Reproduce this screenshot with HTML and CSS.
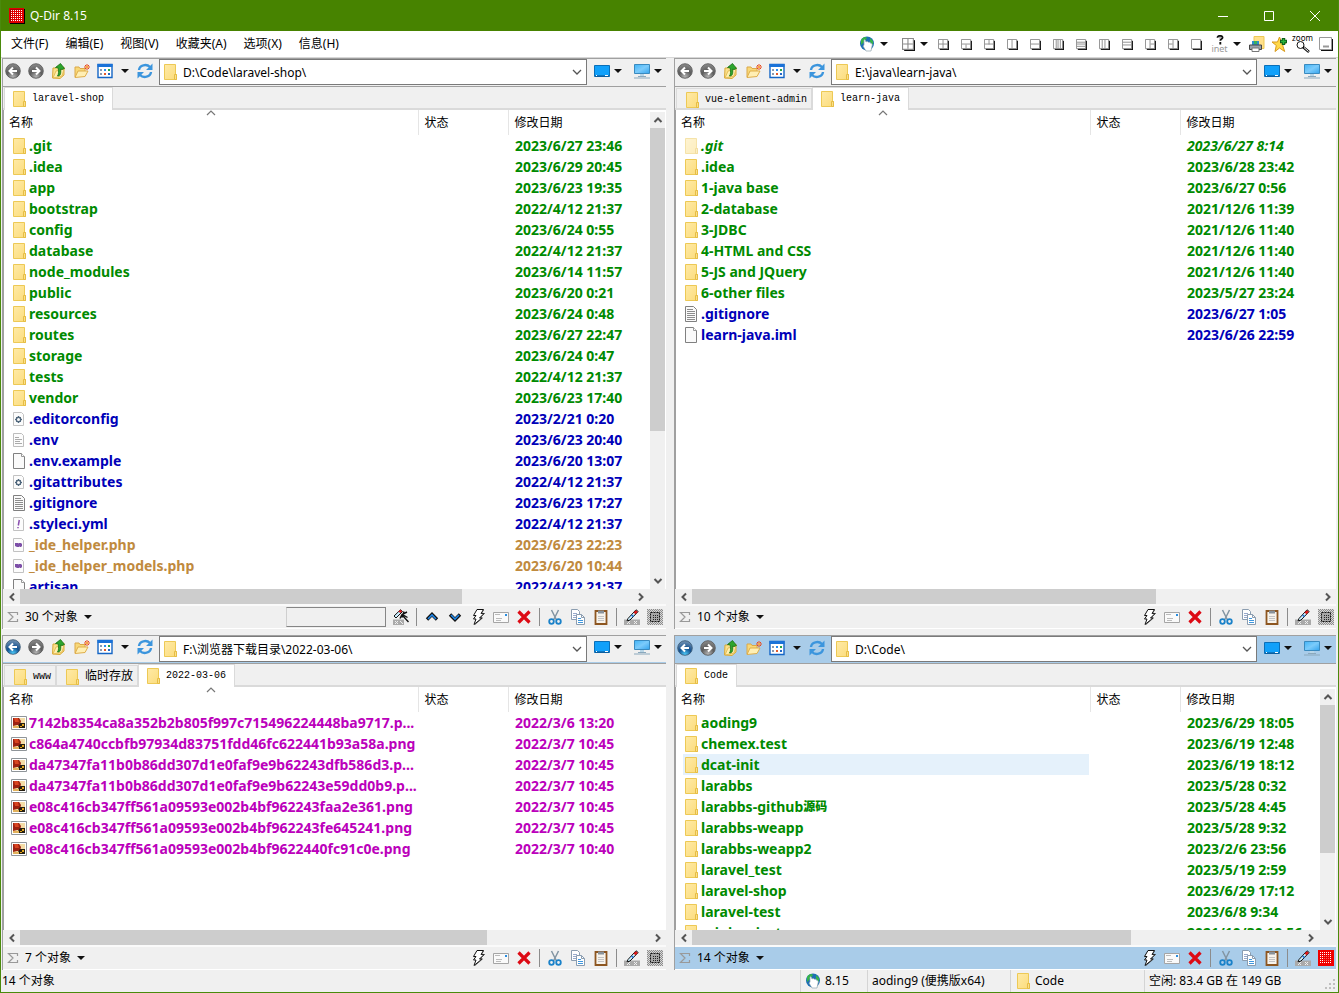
FILE: index.html
```html
<!DOCTYPE html>
<html lang="zh-CN">
<head>
<meta charset="utf-8">
<title>Q-Dir 8.15</title>
<link rel="stylesheet" href="styles.css">
</head>
<body>
<svg class="defs" aria-hidden="true">
  <defs>
    <linearGradient id="gFolder" x1="0" y1="0" x2="1" y2="1"><stop offset="0" stop-color="#ffeaa6"/><stop offset="1" stop-color="#fbdc7c"/></linearGradient>
    <radialGradient id="gGray" cx=".5" cy=".9" r=".9"><stop offset="0" stop-color="#b5b5b5"/><stop offset=".5" stop-color="#5c5c5c"/><stop offset="1" stop-color="#8d8d8d"/></radialGradient>
    <radialGradient id="gBlue" cx=".5" cy=".95" r=".9"><stop offset="0" stop-color="#4fd0ff"/><stop offset=".5" stop-color="#12508f"/><stop offset="1" stop-color="#6f8fb0"/></radialGradient>
    <linearGradient id="gScreen" x1="0" y1="0" x2="1" y2="1"><stop offset="0" stop-color="#41b4f7"/><stop offset=".5" stop-color="#7ccbfb"/><stop offset="1" stop-color="#33a4ee"/></linearGradient>
    <pattern id="pDots" width="2" height="2" patternUnits="userSpaceOnUse"><path d="M0 0h1v1H0z" fill="#fff"/></pattern>
    <pattern id="pGray" width="2" height="2" patternUnits="userSpaceOnUse"><path d="M0 0h2v2H0z" fill="#d8d8d8"/><path d="M0 0h1v1H0zM1 1h1v1H1z" fill="#8c8c8c"/></pattern>
    <pattern id="pDark" width="2" height="2" patternUnits="userSpaceOnUse"><path d="M0 0h1v1H0z" fill="#222"/></pattern>
  </defs>
  <symbol id="folder" viewBox="0 0 16 16"><path d="M2.500 .5h11v10h1v5h-12z" fill="url(#gFolder)" stroke="#edc955"/><path d="M12.500 15v-4.500h2v5h-2z" fill="#fbe08a" stroke="#e6bd45"/></symbol>
  <symbol id="back" viewBox="0 0 16 16"><circle cx="8" cy="8" r="7.300" fill="url(#gGray)" stroke="#555" stroke-width=".8"/><path d="M12 8H5M8 4.500 4.500 8 8 11.500" fill="none" stroke="#fff" stroke-width="2"/></symbol>
  <symbol id="backblue" viewBox="0 0 16 16"><circle cx="8" cy="8" r="7.300" fill="url(#gBlue)" stroke="#34536f" stroke-width=".8"/><path d="M12 8H5M8 4.500 4.500 8 8 11.500" fill="none" stroke="#fff" stroke-width="2"/></symbol>
  <symbol id="fwd" viewBox="0 0 16 16"><circle cx="8" cy="8" r="7.300" fill="url(#gGray)" stroke="#555" stroke-width=".8"/><path d="M4 8h7M8 4.500 11.500 8 8 11.500" fill="none" stroke="#fff" stroke-width="2"/></symbol>
  <symbol id="up" viewBox="0 0 16 16"><path d="M1.500 15 2 5h3l1-1.500h3l1 1.500 3-1v8L9 15.500z" fill="#fbe08a" stroke="#d9a93a"/><path d="M2 15 5 8l8-2-2 7z" fill="#fff0b0" stroke="#dfb54a" stroke-width=".8"/><path d="M6.500 13c3 0 3.500-2 3.200-7L11 6.500 13.500 5.500 9.500.5 4.500 4.500l2.700.5c.3 3 .8 6-.7 8z" fill="#2da52d" stroke="#146e14" stroke-width=".8"/></symbol>
  <symbol id="newf" viewBox="0 0 16 16"><path d="M1 14V4h4l1 1.500h5V8" fill="#f8d878" stroke="#dba848"/><path d="M1 14.500 4 8h10l-3 5.500z" fill="#ffefb4" stroke="#dfae4a"/><path d="M13 1v6M10 4h6M11 2l4 4m0-4-4 4" stroke="#e8491c"/><circle cx="13" cy="4" r="1" fill="#ffc64a"/></symbol>
  <symbol id="views" viewBox="0 0 16 16"><path d="M1 1.500h14v13H1z" fill="#fff" stroke="#1465c5" stroke-width="1.400"/><path d="M.5 1h15v3H.5z" fill="#1a72d8"/><path d="M3 6h2v2H3zM3 10h2v2H3z" fill="#8a9ab0"/><path d="M7 6h2v2H7z" fill="#2a8cf0"/><path d="M11 6h2v2h-2z" fill="#27a548"/><path d="M7 10h2v2H7z" fill="#e35a2c"/><path d="M11 10h2v2h-2z" fill="#2167c8"/></symbol>
  <symbol id="refresh" viewBox="0 0 16 16"><path d="M2 7c.5-5 7.500-6.500 11-3M14 9c-.5 5-7.500 6.500-11 3" fill="none" stroke="#3c95dd" stroke-width="2.400"/><path d="M15.500.5v6.500H9zM.5 15.500V9H7z" fill="#3c95dd"/></symbol>
  <symbol id="desk" viewBox="0 0 16 16"><path d="M.5 2.500h15v11H.5z" fill="#10a0fa" stroke="#0a6fb8"/><path d="M1 13h14" stroke="#0a4f88"/><path d="M2 12.500h1M11 12.500h3" stroke="#fff"/></symbol>
  <symbol id="pc" viewBox="0 0 16 16"><path d="M.5 1.500h15v9H.5z" fill="url(#gScreen)" stroke="#3a8abf"/><path d="M6 11h4v2H6z" fill="#b9d5e6"/><path d="M4 13.500h8M0 15h16" stroke="#8aa8bc"/></symbol>
  <symbol id="caret" viewBox="0 0 8 8"><path d="M0 2h8L4 6z" fill="#111"/></symbol>
  <symbol id="cdown" viewBox="0 0 10 10"><path d="M1 3l4 4 4-4" fill="none" stroke="#555" stroke-width="1.300"/></symbol>
  <symbol id="sorted" viewBox="0 0 10 10"><path d="M1 7l4-4 4 4" fill="none" stroke="#777" stroke-width="1.200"/></symbol>
  <symbol id="sup" viewBox="0 0 10 10"><path d="M1.500 7 5 3.500 8.500 7" fill="none" stroke="#555" stroke-width="2"/></symbol>
  <symbol id="sdn" viewBox="0 0 10 10"><path d="M1.500 3 5 6.500 8.500 3" fill="none" stroke="#555" stroke-width="2"/></symbol>
  <symbol id="slf" viewBox="0 0 10 10"><path d="M7 1.500 3.500 5 7 8.500" fill="none" stroke="#555" stroke-width="2"/></symbol>
  <symbol id="srt" viewBox="0 0 10 10"><path d="M3 1.500 6.500 5 3 8.500" fill="none" stroke="#555" stroke-width="2"/></symbol>
  <symbol id="page" viewBox="0 0 16 16"><path d="M2.500.5h8l3 3v12h-11z" fill="#fafafa" stroke="#808080"/><path d="M10.500.5v3h3" fill="#fff" stroke="#999"/></symbol>
  <symbol id="lines" viewBox="0 0 16 16"><path d="M2.500.5h8l3 3v12h-11z" fill="#fafafa" stroke="#808080"/><path d="M4 3.500h6M4 5.500h8M4 7.500h8M4 9.500h8M4 11.500h8M4 13.500h8" stroke="#8c8c8c"/></symbol>
  <symbol id="env" viewBox="0 0 16 16"><path d="M2.500 1.500h8l2 2v11h-10z" fill="#fcfcfc" stroke="#bdbdbd"/><path d="M4 5.500h4M4 7.500h7M4 9.500h5M4 11.500h7" stroke="#aaa"/></symbol>
  <symbol id="gear" viewBox="0 0 16 16"><path d="M2.500 1.500h8l2 2v11h-10z" fill="#fcfcfc" stroke="#c2c2c2"/><circle cx="7.500" cy="8.500" r="2.200" fill="none" stroke="#50677c" stroke-width="1.400"/><path d="M7.500 5v1M7.500 11v1M4 8.500h1M10 8.500h1M5 6l.8.800M10 6l-.8.800M5 11l.8-.8M10 11l-.8-.8" stroke="#50677c"/></symbol>
  <symbol id="yml" viewBox="0 0 16 16"><path d="M2.500 1.500h8l2 2v11h-10z" fill="#fcfcfc" stroke="#c2c2c2"/><path d="M8.300 4 7.300 9.500M7 11v1.300" stroke="#8a4fb0" stroke-width="1.500"/></symbol>
  <symbol id="php" viewBox="0 0 16 16"><path d="M2.500 1.500h8l2 2v11h-10z" fill="#fcfcfc" stroke="#c2c2c2"/><path d="M4 6h3l.5.5.5-.5h2l1 1v2l-1 1H9l-.5-.8-.5.800H6L4 9z" fill="#7d4fa8"/></symbol>
  <symbol id="img" viewBox="0 0 16 16"><path d="M.5 1.500h15v13H.5z" fill="#fff" stroke="#8f9599"/><path d="M2 3h12v10H2z" fill="#f3dca6"/><path d="M2 3h6l2 3-1 4H6l-4 1z" fill="#9c2112"/><path d="M3 3h4l1 4H4z" fill="#d84421"/><path d="M9 8h5v5H8l-1-2z" fill="#241d10"/><path d="M2 11h6v2H2z" fill="#e2b25c"/><path d="M11 9h2v2h-2zM9 11h2v1H9z" fill="#e2a51c"/></symbol>
  <symbol id="sigma" viewBox="0 0 16 16"><path d="M12.500 6V3.500h-9L8 8l-4.500 4.500h9V10" fill="none" stroke="#999" stroke-width="1.200"/></symbol>
  <symbol id="bolt" viewBox="0 0 16 16"><path d="M7 .5h6.500L11 4.500h3L9.500 9H12l-8 6.500L6 10H3.500L6 6.500H3.500z" fill="#fff" stroke="#111"/><path d="M13.500 1 11.500 4.500h3L10 9h2.500L5 15.500" fill="none" stroke="#333" stroke-width=".7"/></symbol>
  <symbol id="mail" viewBox="0 0 16 16"><path d="M.5 3.500h15v10H.5z" fill="#fafafa" stroke="#a5a5a5"/><path d="M3 9.500h6M3 11.500h5M2 5.500h5" stroke="#bbb"/><path d="M12 5h2v2h-2z" fill="#2b8ee0"/></symbol>
  <symbol id="del" viewBox="0 0 16 16"><path d="m2.500 2.500 11 11M13.500 2.500l-11 11" stroke="#dd0a14" stroke-width="3.200"/></symbol>
  <symbol id="cut" viewBox="0 0 16 16"><path d="m4.500 1 5 10M11.500 1l-5 10" stroke="#8395a3" stroke-width="1.500"/><circle cx="4.500" cy="12.500" r="2.300" fill="none" stroke="#1b82c9" stroke-width="1.800"/><circle cx="11.500" cy="12.500" r="2.300" fill="none" stroke="#1b82c9" stroke-width="1.800"/></symbol>
  <symbol id="copy" viewBox="0 0 16 16"><path d="M1.500.5h6l2 2v8h-8z" fill="#fff" stroke="#8b9db0"/><path d="M3 4.500h4M3 6.500h3M3 8.500h3" stroke="#9ac"/><path d="M6.500 5.500h5l3 3v7h-8z" fill="#fff" stroke="#8b9db0"/><path d="M11.500 5.500v3h3" fill="none" stroke="#8b9db0"/><path d="M8 9.500h3M8 11.500h5M8 13.500h5" stroke="#3e96dd"/></symbol>
  <symbol id="paste" viewBox="0 0 16 16"><path d="M2.500 2h11v13h-11z" fill="#f7f3ec" stroke="#8d5620" stroke-width="1.800"/><path d="M5 1.500h6v3H5z" fill="#889199"/><path d="M5 7.500h6M5 9.500h6M5 11.500h6" stroke="#c3c3c3"/></symbol>
  <symbol id="pen" viewBox="0 0 16 16"><path d="M0 10.500h16V16H0z" fill="#aaa"/><path d="M3 12l3 3m0-3-3 3M10 12l3 3m0-3-3 3" stroke="#eee"/><path d="M4 9.500 12 .8l2.200 1.700L6 11l-3 1z" fill="#cdefff" stroke="#111"/><path d="m9.500 3.600 2.400-2.400 2 1.600-2.400 2.400z" fill="#e01818"/><path d="m7.500 6 2 1.600" stroke="#1670d8" stroke-width="1.500"/></symbol>
  <symbol id="wand" viewBox="0 0 16 16"><path d="M0 10.500h11V16H0z" fill="#aaa"/><path d="M2 12l3 3m0-3-3 3M7 12l3 3" stroke="#eee"/><path d="M1 7 7.500.8l2 1.700L3 9z" fill="#cdefff" stroke="#111"/><path d="m5.500 2.600 2-1.800 1.700 1.600-2 1.700z" fill="#e01818"/><path d="m15.500 13-5.500-6M7 9.500l2-4 5-2.500M9.500 5.500l5 3M11 2.500l-2 6" fill="none" stroke="#111" stroke-width="1.400"/></symbol>
  <symbol id="dots" viewBox="0 0 16 16"><path d="M0 0h16v16H0z" fill="url(#pGray)"/><path d="M3.500 3.500h9v9h-9z" fill="#a6a6a6" stroke="#111" stroke-dasharray="2 1"/><path d="M5 5h7v7H5z" fill="url(#pDark)"/></symbol>
  <symbol id="dotsred" viewBox="0 0 16 16"><path d="M0 0h16v16H0z" fill="#f00000"/><path d="M2 2h12v12H2z" fill="url(#pDots)"/><path d="M5 5h6v6H5z" fill="#f00000" fill-opacity=".6"/></symbol>
  <symbol id="applogo" viewBox="0 0 16 16"><path d="M1 1h15v15H1z" fill="#000"/><path d="M0 0h15v15H0z" fill="#e00000"/><path d="M1 1h13v13H1z" fill="#a00"/><path d="M2 2h12v12H2z" fill="#e00000"/><path d="M2 2h12v12H2z" fill="url(#pDots)"/></symbol>
  <symbol id="nup" viewBox="0 0 16 16"><path d="M3 10.500 8 5.500l5 5" fill="none" stroke="#111" stroke-width="3.400"/><path d="M4 10 8 6l4 4" fill="none" stroke="#1f86e8" stroke-width="1.600"/></symbol>
  <symbol id="ndn" viewBox="0 0 16 16"><path d="m3 5.500 5 5 5-5" fill="none" stroke="#111" stroke-width="3.400"/><path d="m4 6 4 4 4-4" fill="none" stroke="#1f86e8" stroke-width="1.600"/></symbol>
  <symbol id="globe" viewBox="0 0 16 16"><circle cx="8" cy="7.500" r="7" fill="#1d6fb4"/><path d="M2 4c3-4 5-3 6-2L5 6 2 9zM11 2l3 3v4l-3-3z" fill="#35b44a"/><path d="M5 4c1-.8 1.500 0 2 2 1-.7 2-.5 2.500.3 1-.4 2 0 2.200 1 1 0 1.600.6 1.500 2L12 15H7L4 10l1-.8z" fill="#fff" stroke="#8fa3b0" stroke-width=".7"/></symbol>
  <symbol id="frame" viewBox="0 0 12 12"><path d="M2 2h10v10H2z" fill="#111"/><path d="M.5.500h10v10H.5z" fill="#fff" stroke="#8a8a8a"/></symbol>
  <symbol id="help" viewBox="0 0 16 16"><path d="M4 4.500C4 0 12.500.5 12 4.500c0 2-3.500 2-3.500 4.500M8.500 11v4" fill="none" stroke="#111" stroke-width="3"/><circle cx="8" cy="4.500" r="1.500" fill="#999"/></symbol>
  <symbol id="printer" viewBox="0 0 16 16"><path d="M5 .5h10v12H5z" fill="#ffe08a" stroke="#edc955"/><path d="M3 5h7v4H3z" fill="#2a8fce"/><path d="M5 5h3v3H5z" fill="#37b25c"/><path d="M.5 9h12v4.500H.5z" fill="#9aa2aa" stroke="#444"/><path d="M3 12h7v3.500H3z" fill="#fff" stroke="#777"/></symbol>
  <symbol id="star" viewBox="0 0 16 16"><path d="m7.500 1 2 5h5.500l-4.300 3.500 2 6L7.500 12 3 15.500 4.300 9.500 0 6h5.500z" fill="#ffd94a" stroke="#d99a1c"/><path d="M8 5.500h7M11.500 2v7" stroke="#0d5f1a" stroke-width="3.400"/><path d="M9 5.500h5M11.500 3v5" stroke="#29b33c" stroke-width="1.400"/></symbol>
  <symbol id="lens" viewBox="0 0 16 12"><circle cx="5.500" cy="4" r="3.500" fill="#fff" stroke="#111"/><path d="m8 6 6 5" stroke="#111" stroke-width="2.600"/><path d="m9 6.500 4.500 4" stroke="#fff" stroke-width="1"/></symbol>
  <symbol id="minbox" viewBox="0 0 14 14"><path d="M2 2h12v12H2z" fill="#111"/><path d="M.5.500h12v12H.5z" fill="#fff" stroke="#999"/><path d="M4 9.500h6" stroke="#999" stroke-width="2"/></symbol>
</svg>

<div class="window">
  <header class="title">
    <svg class="i16"><use href="#applogo"/></svg>
    <h1>Q-Dir 8.15</h1>
    <button class="wbtn" aria-label="最小化"><svg viewBox="0 0 10 10"><path d="M0 5.500h10"/></svg></button>
    <button class="wbtn" aria-label="最大化"><svg viewBox="0 0 10 10"><path d="M.5.500h9v9h-9z"/></svg></button>
    <button class="wbtn" aria-label="关闭"><svg viewBox="0 0 10 10"><path d="m0 0 10 10M10 0 0 10"/></svg></button>
  </header>

  <nav class="menu">
    <button>文件(F)</button><button>编辑(E)</button><button>视图(V)</button><button>收藏夹(A)</button><button>选项(X)</button><button>信息(H)</button>
    <div class="quick">
      <button aria-label="网络"><svg class="i16"><use href="#globe"/></svg></button>
      <button class="c c1" aria-label="网络菜单"><svg class="i8"><use href="#caret"/></svg></button>
      <button aria-label="布局"><svg class="i12" viewBox="0 0 12 12"><use href="#frame"/><path class="g" d="M5.500 1v9M1 5.500h9"/></svg></button>
      <button class="c c2" aria-label="布局菜单"><svg class="i8"><use href="#caret"/></svg></button>
      <button aria-label="布局 1"><svg class="i10" viewBox="0 0 12 12"><use href="#frame"/><path class="g" d="M5.500 1v9M1 5.500h9"/></svg></button>
      <button aria-label="布局 2"><svg class="i10" viewBox="0 0 12 12"><use href="#frame"/><path class="g" d="M5.500 6v4M1 5.500h9"/></svg></button>
      <button aria-label="布局 3"><svg class="i10" viewBox="0 0 12 12"><use href="#frame"/><path class="g" d="M5.500 1v5M1 5.500h9"/></svg></button>
      <button aria-label="布局 4"><svg class="i10" viewBox="0 0 12 12"><use href="#frame"/><path class="g" d="M5.500 1v9"/></svg></button>
      <button aria-label="布局 5"><svg class="i10" viewBox="0 0 12 12"><use href="#frame"/><path class="g" d="M1 5.500h9"/></svg></button>
      <button aria-label="布局 6"><svg class="i10" viewBox="0 0 12 12"><use href="#frame"/><path class="g" d="M3.500 1v9M5.500 1v9M8 1v9"/></svg></button>
      <button aria-label="布局 7"><svg class="i10" viewBox="0 0 12 12"><use href="#frame"/><path class="g" d="M1 3.500h9M1 5.500h9M1 8h9"/></svg></button>
      <button aria-label="布局 8"><svg class="i10" viewBox="0 0 12 12"><use href="#frame"/><path class="g" d="M3.500 1v9M6.500 1v9"/></svg></button>
      <button aria-label="布局 9"><svg class="i10" viewBox="0 0 12 12"><use href="#frame"/><path class="g" d="M1 3.500h9M1 6.500h9"/></svg></button>
      <button aria-label="布局 10"><svg class="i10" viewBox="0 0 12 12"><use href="#frame"/><path class="g" d="M5.500 1v9M6 5.500h4"/></svg></button>
      <button aria-label="布局 11"><svg class="i10" viewBox="0 0 12 12"><use href="#frame"/><path class="g" d="M5.500 1v9M1 5.500h4"/></svg></button>
      <button aria-label="布局 12"><svg class="i10" viewBox="0 0 12 12"><use href="#frame"/></svg></button>
      <button class="stack"><svg class="helpi"><use href="#help"/></svg><span class="inet">inet</span></button>
      <button class="c c3" aria-label="帮助菜单"><svg class="i8"><use href="#caret"/></svg></button>
      <button aria-label="打印"><svg class="i16"><use href="#printer"/></svg></button>
      <button aria-label="收藏"><svg class="i16"><use href="#star"/></svg></button>
      <button class="stack"><span class="zoomt">zoom</span><svg class="lensi"><use href="#lens"/></svg></button>
      <button aria-label="托盘"><svg class="i14"><use href="#minbox"/></svg></button>
    </div>
  </nav>

  <main class="panes">
    <section class="pane" aria-label="窗格 1">
      <div class="tools">
        <button aria-label="后退"><svg class="i16"><use href="#back"/></svg></button>
        <button aria-label="前进"><svg class="i16"><use href="#fwd"/></svg></button>
        <button aria-label="向上"><svg class="i16"><use href="#up"/></svg></button>
        <button aria-label="新建"><svg class="i16"><use href="#newf"/></svg></button>
        <button aria-label="查看"><svg class="i16"><use href="#views"/></svg></button>
        <button class="c" aria-label="查看菜单"><svg class="i8"><use href="#caret"/></svg></button>
        <button aria-label="刷新"><svg class="i16"><use href="#refresh"/></svg></button>
        <div class="addr"><svg class="i16"><use href="#folder"/></svg><input type="text" aria-label="地址" value="D:\Code\laravel-shop\"><button aria-label="展开"><svg class="i10"><use href="#cdown"/></svg></button></div>
        <div class="disks"><button aria-label="桌面"><svg class="i16"><use href="#desk"/></svg></button><button aria-label="桌面菜单"><svg class="i8"><use href="#caret"/></svg></button><button class="pc" aria-label="电脑"><svg class="i16"><use href="#pc"/></svg></button><button aria-label="电脑菜单"><svg class="i8"><use href="#caret"/></svg></button></div>
      </div>
      <div class="tabs"><button class="tab on"><svg class="i16"><use href="#folder"/></svg>laravel-shop</button></div>
      <div class="body">
        <div class="list">
          <table>
            <colgroup><col class="cn"><col class="cs"><col></colgroup>
            <thead><tr><th>名称<svg class="sort"><use href="#sorted"/></svg></th><th>状态</th><th>修改日期</th></tr></thead>
            <tbody>
              <tr class="dir"><td><span><svg class="i16"><use href="#folder"/></svg>.git</span></td><td></td><td>2023/6/27 23:46</td></tr>
              <tr class="dir"><td><span><svg class="i16"><use href="#folder"/></svg>.idea</span></td><td></td><td>2023/6/29 20:45</td></tr>
              <tr class="dir"><td><span><svg class="i16"><use href="#folder"/></svg>app</span></td><td></td><td>2023/6/23 19:35</td></tr>
              <tr class="dir"><td><span><svg class="i16"><use href="#folder"/></svg>bootstrap</span></td><td></td><td>2022/4/12 21:37</td></tr>
              <tr class="dir"><td><span><svg class="i16"><use href="#folder"/></svg>config</span></td><td></td><td>2023/6/24 0:55</td></tr>
              <tr class="dir"><td><span><svg class="i16"><use href="#folder"/></svg>database</span></td><td></td><td>2022/4/12 21:37</td></tr>
              <tr class="dir"><td><span><svg class="i16"><use href="#folder"/></svg>node_modules</span></td><td></td><td>2023/6/14 11:57</td></tr>
              <tr class="dir"><td><span><svg class="i16"><use href="#folder"/></svg>public</span></td><td></td><td>2023/6/20 0:21</td></tr>
              <tr class="dir"><td><span><svg class="i16"><use href="#folder"/></svg>resources</span></td><td></td><td>2023/6/24 0:48</td></tr>
              <tr class="dir"><td><span><svg class="i16"><use href="#folder"/></svg>routes</span></td><td></td><td>2023/6/27 22:47</td></tr>
              <tr class="dir"><td><span><svg class="i16"><use href="#folder"/></svg>storage</span></td><td></td><td>2023/6/24 0:47</td></tr>
              <tr class="dir"><td><span><svg class="i16"><use href="#folder"/></svg>tests</span></td><td></td><td>2022/4/12 21:37</td></tr>
              <tr class="dir"><td><span><svg class="i16"><use href="#folder"/></svg>vendor</span></td><td></td><td>2023/6/23 17:40</td></tr>
              <tr class="file"><td><span><svg class="i16"><use href="#gear"/></svg>.editorconfig</span></td><td></td><td>2023/2/21 0:20</td></tr>
              <tr class="file"><td><span><svg class="i16"><use href="#env"/></svg>.env</span></td><td></td><td>2023/6/23 20:40</td></tr>
              <tr class="file"><td><span><svg class="i16"><use href="#page"/></svg>.env.example</span></td><td></td><td>2023/6/20 13:07</td></tr>
              <tr class="file"><td><span><svg class="i16"><use href="#gear"/></svg>.gitattributes</span></td><td></td><td>2022/4/12 21:37</td></tr>
              <tr class="file"><td><span><svg class="i16"><use href="#lines"/></svg>.gitignore</span></td><td></td><td>2023/6/23 17:27</td></tr>
              <tr class="file"><td><span><svg class="i16"><use href="#yml"/></svg>.styleci.yml</span></td><td></td><td>2022/4/12 21:37</td></tr>
              <tr class="php"><td><span><svg class="i16"><use href="#php"/></svg>_ide_helper.php</span></td><td></td><td>2023/6/23 22:23</td></tr>
              <tr class="php"><td><span><svg class="i16"><use href="#php"/></svg>_ide_helper_models.php</span></td><td></td><td>2023/6/20 10:44</td></tr>
              <tr class="file"><td><span><svg class="i16"><use href="#page"/></svg>artisan</span></td><td></td><td>2022/4/12 21:37</td></tr>
            </tbody>
          </table>
        </div>
        <div class="vbar"><button aria-label="上"><svg class="i10"><use href="#sup"/></svg></button><div class="track"><div class="thumb" style="height:68%"></div></div><button aria-label="下"><svg class="i10"><use href="#sdn"/></svg></button></div>
      </div>
      <div class="hbar corner"><button aria-label="左"><svg class="i10"><use href="#slf"/></svg></button><div class="track"><div class="thumb" style="width:72.300%"></div></div><button aria-label="右"><svg class="i10"><use href="#srt"/></svg></button></div>
      <div class="stat">
        <svg class="i16"><use href="#sigma"/></svg><button class="count">30 个对象<svg class="i8"><use href="#caret"/></svg></button>
        <div class="acts">
          <input type="text" class="filter" aria-label="过滤">
          <button aria-label="过滤选项"><svg class="i16"><use href="#wand"/></svg></button><i class="sep"></i>
          <button aria-label="上一个"><svg class="i16"><use href="#nup"/></svg></button>
          <button aria-label="下一个"><svg class="i16"><use href="#ndn"/></svg></button>
          <button aria-label="快速"><svg class="i16"><use href="#bolt"/></svg></button>
          <button aria-label="邮件"><svg class="i16"><use href="#mail"/></svg></button>
          <button aria-label="删除"><svg class="i16"><use href="#del"/></svg></button><i class="sep"></i>
          <button aria-label="剪切"><svg class="i16"><use href="#cut"/></svg></button>
          <button aria-label="复制"><svg class="i16"><use href="#copy"/></svg></button>
          <button aria-label="粘贴"><svg class="i16"><use href="#paste"/></svg></button><i class="sep"></i>
          <button aria-label="重命名"><svg class="i16"><use href="#pen"/></svg></button>
          <button aria-label="选择"><svg class="i16"><use href="#dots"/></svg></button>
        </div>
      </div>
    </section>

    <section class="pane right" aria-label="窗格 2">
      <div class="tools">
        <button aria-label="后退"><svg class="i16"><use href="#back"/></svg></button>
        <button aria-label="前进"><svg class="i16"><use href="#fwd"/></svg></button>
        <button aria-label="向上"><svg class="i16"><use href="#up"/></svg></button>
        <button aria-label="新建"><svg class="i16"><use href="#newf"/></svg></button>
        <button aria-label="查看"><svg class="i16"><use href="#views"/></svg></button>
        <button class="c" aria-label="查看菜单"><svg class="i8"><use href="#caret"/></svg></button>
        <button aria-label="刷新"><svg class="i16"><use href="#refresh"/></svg></button>
        <div class="addr"><svg class="i16"><use href="#folder"/></svg><input type="text" aria-label="地址" value="E:\java\learn-java\"><button aria-label="展开"><svg class="i10"><use href="#cdown"/></svg></button></div>
        <div class="disks"><button aria-label="桌面"><svg class="i16"><use href="#desk"/></svg></button><button aria-label="桌面菜单"><svg class="i8"><use href="#caret"/></svg></button><button class="pc" aria-label="电脑"><svg class="i16"><use href="#pc"/></svg></button><button aria-label="电脑菜单"><svg class="i8"><use href="#caret"/></svg></button></div>
      </div>
      <div class="tabs"><button class="tab"><svg class="i16"><use href="#folder"/></svg>vue-element-admin</button><button class="tab on"><svg class="i16"><use href="#folder"/></svg>learn-java</button></div>
      <div class="body">
        <div class="list">
          <table>
            <colgroup><col class="cn"><col class="cs"><col></colgroup>
            <thead><tr><th>名称<svg class="sort"><use href="#sorted"/></svg></th><th>状态</th><th>修改日期</th></tr></thead>
            <tbody>
              <tr class="dir hid"><td><span><svg class="i16"><use href="#folder"/></svg>.git</span></td><td></td><td>2023/6/27 8:14</td></tr>
              <tr class="dir"><td><span><svg class="i16"><use href="#folder"/></svg>.idea</span></td><td></td><td>2023/6/28 23:42</td></tr>
              <tr class="dir"><td><span><svg class="i16"><use href="#folder"/></svg>1-java base</span></td><td></td><td>2023/6/27 0:56</td></tr>
              <tr class="dir"><td><span><svg class="i16"><use href="#folder"/></svg>2-database</span></td><td></td><td>2021/12/6 11:39</td></tr>
              <tr class="dir"><td><span><svg class="i16"><use href="#folder"/></svg>3-JDBC</span></td><td></td><td>2021/12/6 11:40</td></tr>
              <tr class="dir"><td><span><svg class="i16"><use href="#folder"/></svg>4-HTML and CSS</span></td><td></td><td>2021/12/6 11:40</td></tr>
              <tr class="dir"><td><span><svg class="i16"><use href="#folder"/></svg>5-JS and JQuery</span></td><td></td><td>2021/12/6 11:40</td></tr>
              <tr class="dir"><td><span><svg class="i16"><use href="#folder"/></svg>6-other files</span></td><td></td><td>2023/5/27 23:24</td></tr>
              <tr class="file"><td><span><svg class="i16"><use href="#lines"/></svg>.gitignore</span></td><td></td><td>2023/6/27 1:05</td></tr>
              <tr class="file"><td><span><svg class="i16"><use href="#page"/></svg>learn-java.iml</span></td><td></td><td>2023/6/26 22:59</td></tr>
            </tbody>
          </table>
        </div>
      </div>
      <div class="hbar"><button aria-label="左"><svg class="i10"><use href="#slf"/></svg></button><div class="track"><div class="thumb" style="width:74%"></div></div><button aria-label="右"><svg class="i10"><use href="#srt"/></svg></button></div>
      <div class="stat">
        <svg class="i16"><use href="#sigma"/></svg><button class="count">10 个对象<svg class="i8"><use href="#caret"/></svg></button>
        <div class="acts">
          <button aria-label="快速"><svg class="i16"><use href="#bolt"/></svg></button>
          <button aria-label="邮件"><svg class="i16"><use href="#mail"/></svg></button>
          <button aria-label="删除"><svg class="i16"><use href="#del"/></svg></button><i class="sep"></i>
          <button aria-label="剪切"><svg class="i16"><use href="#cut"/></svg></button>
          <button aria-label="复制"><svg class="i16"><use href="#copy"/></svg></button>
          <button aria-label="粘贴"><svg class="i16"><use href="#paste"/></svg></button><i class="sep"></i>
          <button aria-label="重命名"><svg class="i16"><use href="#pen"/></svg></button>
          <button aria-label="选择"><svg class="i16"><use href="#dots"/></svg></button>
        </div>
      </div>
    </section>

    <section class="pane recent" aria-label="窗格 3">
      <div class="tools">
        <button aria-label="后退"><svg class="i16"><use href="#backblue"/></svg></button>
        <button aria-label="前进"><svg class="i16"><use href="#fwd"/></svg></button>
        <button aria-label="向上"><svg class="i16"><use href="#up"/></svg></button>
        <button aria-label="新建"><svg class="i16"><use href="#newf"/></svg></button>
        <button aria-label="查看"><svg class="i16"><use href="#views"/></svg></button>
        <button class="c" aria-label="查看菜单"><svg class="i8"><use href="#caret"/></svg></button>
        <button aria-label="刷新"><svg class="i16"><use href="#refresh"/></svg></button>
        <div class="addr"><svg class="i16"><use href="#folder"/></svg><input type="text" aria-label="地址" value="F:\浏览器下载目录\2022-03-06\"><button aria-label="展开"><svg class="i10"><use href="#cdown"/></svg></button></div>
        <div class="disks"><button aria-label="桌面"><svg class="i16"><use href="#desk"/></svg></button><button aria-label="桌面菜单"><svg class="i8"><use href="#caret"/></svg></button><button class="pc" aria-label="电脑"><svg class="i16"><use href="#pc"/></svg></button><button aria-label="电脑菜单"><svg class="i8"><use href="#caret"/></svg></button></div>
      </div>
      <div class="tabs"><button class="tab"><svg class="i16"><use href="#folder"/></svg>www</button><button class="tab cn12"><svg class="i16"><use href="#folder"/></svg>临时存放</button><button class="tab on"><svg class="i16"><use href="#folder"/></svg>2022-03-06</button></div>
      <div class="body">
        <div class="list">
          <table>
            <colgroup><col class="cn"><col class="cs"><col></colgroup>
            <thead><tr><th>名称<svg class="sort"><use href="#sorted"/></svg></th><th>状态</th><th>修改日期</th></tr></thead>
            <tbody>
              <tr class="png"><td><span><svg class="i16"><use href="#img"/></svg>7142b8354ca8a352b2b805f997c715496224448ba9717.p...</span></td><td></td><td>2022/3/6 13:20</td></tr>
              <tr class="png"><td><span><svg class="i16"><use href="#img"/></svg>c864a4740ccbfb97934d83751fdd46fc622441b93a58a.png</span></td><td></td><td>2022/3/7 10:45</td></tr>
              <tr class="png"><td><span><svg class="i16"><use href="#img"/></svg>da47347fa11b0b86dd307d1e0faf9e9b62243dfb586d3.p...</span></td><td></td><td>2022/3/7 10:45</td></tr>
              <tr class="png"><td><span><svg class="i16"><use href="#img"/></svg>da47347fa11b0b86dd307d1e0faf9e9b62243e59dd0b9.p...</span></td><td></td><td>2022/3/7 10:45</td></tr>
              <tr class="png"><td><span><svg class="i16"><use href="#img"/></svg>e08c416cb347ff561a09593e002b4bf962243faa2e361.png</span></td><td></td><td>2022/3/7 10:45</td></tr>
              <tr class="png"><td><span><svg class="i16"><use href="#img"/></svg>e08c416cb347ff561a09593e002b4bf962243fe645241.png</span></td><td></td><td>2022/3/7 10:45</td></tr>
              <tr class="png"><td><span><svg class="i16"><use href="#img"/></svg>e08c416cb347ff561a09593e002b4bf9622440fc91c0e.png</span></td><td></td><td>2022/3/7 10:40</td></tr>
            </tbody>
          </table>
        </div>
      </div>
      <div class="hbar"><button aria-label="左"><svg class="i10"><use href="#slf"/></svg></button><div class="track"><div class="thumb" style="width:74.300%"></div></div><button aria-label="右"><svg class="i10"><use href="#srt"/></svg></button></div>
      <div class="stat">
        <svg class="i16"><use href="#sigma"/></svg><button class="count">7 个对象<svg class="i8"><use href="#caret"/></svg></button>
        <div class="acts">
          <button aria-label="快速"><svg class="i16"><use href="#bolt"/></svg></button>
          <button aria-label="邮件"><svg class="i16"><use href="#mail"/></svg></button>
          <button aria-label="删除"><svg class="i16"><use href="#del"/></svg></button><i class="sep"></i>
          <button aria-label="剪切"><svg class="i16"><use href="#cut"/></svg></button>
          <button aria-label="复制"><svg class="i16"><use href="#copy"/></svg></button>
          <button aria-label="粘贴"><svg class="i16"><use href="#paste"/></svg></button><i class="sep"></i>
          <button aria-label="重命名"><svg class="i16"><use href="#pen"/></svg></button>
          <button aria-label="选择"><svg class="i16"><use href="#dots"/></svg></button>
        </div>
      </div>
    </section>

    <section class="pane right active" aria-label="窗格 4">
      <div class="tools">
        <button aria-label="后退"><svg class="i16"><use href="#backblue"/></svg></button>
        <button aria-label="前进"><svg class="i16"><use href="#fwd"/></svg></button>
        <button aria-label="向上"><svg class="i16"><use href="#up"/></svg></button>
        <button aria-label="新建"><svg class="i16"><use href="#newf"/></svg></button>
        <button aria-label="查看"><svg class="i16"><use href="#views"/></svg></button>
        <button class="c" aria-label="查看菜单"><svg class="i8"><use href="#caret"/></svg></button>
        <button aria-label="刷新"><svg class="i16"><use href="#refresh"/></svg></button>
        <div class="addr"><svg class="i16"><use href="#folder"/></svg><input type="text" aria-label="地址" value="D:\Code\"><button aria-label="展开"><svg class="i10"><use href="#cdown"/></svg></button></div>
        <div class="disks"><button aria-label="桌面"><svg class="i16"><use href="#desk"/></svg></button><button aria-label="桌面菜单"><svg class="i8"><use href="#caret"/></svg></button><button class="pc" aria-label="电脑"><svg class="i16"><use href="#pc"/></svg></button><button aria-label="电脑菜单"><svg class="i8"><use href="#caret"/></svg></button></div>
      </div>
      <div class="tabs"><button class="tab on"><svg class="i16"><use href="#folder"/></svg>Code</button></div>
      <div class="body">
        <div class="list">
          <table>
            <colgroup><col class="cn"><col class="cs"><col></colgroup>
            <thead><tr><th>名称</th><th>状态</th><th>修改日期</th></tr></thead>
            <tbody>
              <tr class="dir"><td><span><svg class="i16"><use href="#folder"/></svg>aoding9</span></td><td></td><td>2023/6/29 18:05</td></tr>
              <tr class="dir"><td><span><svg class="i16"><use href="#folder"/></svg>chemex.test</span></td><td></td><td>2023/6/19 12:48</td></tr>
              <tr class="dir hot"><td><span><svg class="i16"><use href="#folder"/></svg>dcat-init</span></td><td></td><td>2023/6/19 18:12</td></tr>
              <tr class="dir"><td><span><svg class="i16"><use href="#folder"/></svg>larabbs</span></td><td></td><td>2023/5/28 0:32</td></tr>
              <tr class="dir"><td><span><svg class="i16"><use href="#folder"/></svg>larabbs-github<b class="han">源码</b></span></td><td></td><td>2023/5/28 4:45</td></tr>
              <tr class="dir"><td><span><svg class="i16"><use href="#folder"/></svg>larabbs-weapp</span></td><td></td><td>2023/5/28 9:32</td></tr>
              <tr class="dir"><td><span><svg class="i16"><use href="#folder"/></svg>larabbs-weapp2</span></td><td></td><td>2023/2/6 23:56</td></tr>
              <tr class="dir"><td><span><svg class="i16"><use href="#folder"/></svg>laravel_test</span></td><td></td><td>2023/5/19 2:59</td></tr>
              <tr class="dir"><td><span><svg class="i16"><use href="#folder"/></svg>laravel-shop</span></td><td></td><td>2023/6/29 17:12</td></tr>
              <tr class="dir"><td><span><svg class="i16"><use href="#folder"/></svg>laravel-test</span></td><td></td><td>2023/6/8 9:34</td></tr>
              <tr class="dir"><td><span><svg class="i16"><use href="#folder"/></svg>miniprojects</span></td><td></td><td>2021/10/30 12:56</td></tr>
            </tbody>
          </table>
        </div>
        <div class="vbar"><button aria-label="上"><svg class="i10"><use href="#sup"/></svg></button><div class="track"><div class="thumb" style="height:71%"></div></div><button aria-label="下"><svg class="i10"><use href="#sdn"/></svg></button></div>
      </div>
      <div class="hbar corner"><button aria-label="左"><svg class="i10"><use href="#slf"/></svg></button><div class="track"><div class="thumb" style="width:72%"></div></div><button aria-label="右"><svg class="i10"><use href="#srt"/></svg></button></div>
      <div class="stat">
        <svg class="i16"><use href="#sigma"/></svg><button class="count">14 个对象<svg class="i8"><use href="#caret"/></svg></button>
        <div class="acts">
          <button aria-label="快速"><svg class="i16"><use href="#bolt"/></svg></button>
          <button aria-label="邮件"><svg class="i16"><use href="#mail"/></svg></button>
          <button aria-label="删除"><svg class="i16"><use href="#del"/></svg></button><i class="sep"></i>
          <button aria-label="剪切"><svg class="i16"><use href="#cut"/></svg></button>
          <button aria-label="复制"><svg class="i16"><use href="#copy"/></svg></button>
          <button aria-label="粘贴"><svg class="i16"><use href="#paste"/></svg></button><i class="sep"></i>
          <button aria-label="重命名"><svg class="i16"><use href="#pen"/></svg></button>
          <button aria-label="选择"><svg class="i16"><use href="#dotsred"/></svg></button>
        </div>
      </div>
    </section>
  </main>

  <footer class="foot">
    <div class="f0">14 个对象</div>
    <div class="f1"><svg class="i16"><use href="#globe"/></svg>8.15</div>
    <div class="f2">aoding9 (便携版x64)</div>
    <div class="f3"><svg class="i16"><use href="#folder"/></svg>Code</div>
    <div class="f4">空闲: 83.4 GB 在 149 GB<svg class="grip" viewBox="0 0 12 12"><path d="M8 0h2v2H8zM8 4h2v2H8zM8 8h2v2H8zM4 4h2v2H4zM4 8h2v2H4zM0 8h2v2H0z" fill="#bfbfbf"/></svg></div>
  </footer>
</div>
</body>
</html>
```
FILE: styles.css
```css
* { box-sizing: border-box; }

body {
  margin: 0;
  font: 12px/16px "Noto Sans", "Noto Sans CJK SC", sans-serif;
  color: #000;
  background: #f0f0f0;
}

button, input { font: inherit; color: inherit; border: 0; background: none; padding: 0; margin: 0; }
input { outline: 0; min-width: 0; }
button { display: flex; align-items: center; justify-content: center; flex: none; white-space: nowrap; }
svg { display: block; flex: none; }

.defs { position: absolute; width: 0; height: 0; }
.i8 { width: 8px; height: 8px; }
.i10 { width: 10px; height: 10px; }
.i12 { width: 12px; height: 12px; }
.i14 { width: 14px; height: 14px; }
.i16 { width: 16px; height: 16px; }

.window {
  height: 100vh;
  display: flex;
  flex-direction: column;
  border: 1px solid #4a8a0c;
  border-top: 0;
}

/* title bar */
.title { display: flex; align-items: center; height: 31px; padding-left: 8px; background: #478300; color: #fff; flex: none; }
.title h1 { flex: 1; margin: 0 0 0 5px; font-size: 12px; font-weight: 400; }
.wbtn { width: 46px; height: 31px; }
.wbtn svg { width: 10px; height: 10px; fill: none; stroke: #fff; }

/* menu bar */
.menu { display: flex; align-items: center; gap: 17px; height: 27px; padding-left: 10px; background: #fff; border-bottom: 1px solid #d7d7d7; flex: none; }
.quick { display: flex; align-items: center; margin-left: auto; padding-right: 1px; }
.quick button { width: 23px; height: 24px; }
.quick .i10 { width: 11px; height: 11px; }
.quick .i12 { width: 13px; height: 13px; }
.quick .c { width: 12px; }
.quick .c1 { margin-right: 7px; }
.quick .c2 { width: 8px; margin-right: 4px; }
.quick .c3 { margin-right: 2px; }
.g { fill: none; stroke: #8a8a8a; }
.quick .stack { flex-direction: column; }
.helpi { width: 12px; height: 10px; }
.inet { font-size: 9px; line-height: 8px; color: #999; }
.zoomt { font-size: 8px; line-height: 6px; }
.lensi { width: 16px; height: 12px; }

/* panes */
.panes {
  flex: 1;
  min-height: 0;
  display: grid;
  grid-template-columns: minmax(0, 1fr) minmax(0, 1fr);
  grid-template-rows: minmax(0, 571fr) minmax(0, 335fr);
  gap: 6px 8px;
  padding-left: 1px;
}
.pane { display: flex; flex-direction: column; min-height: 0; border-left: 1px solid #a0a0a0; }
.pane.right { margin-right: 2px; }

.tools { display: flex; align-items: center; gap: 7px; height: 28px; padding-left: 2px; border-top: 1px solid #a0a0a0; flex: none; }
.tools > button { height: 16px; margin-bottom: 4px; }
.tools > .c { width: 10px; }
.addr { display: flex; align-items: center; flex: 1; height: 26px; margin: 0 0 1px -1px; padding-left: 2px; background: #fff; border: 1px solid #7a7a7a; min-width: 0; }
.addr input { flex: 1; height: 20px; margin-left: 5px; }
.addr > button { width: 18px; height: 22px; }
.disks { display: flex; align-items: center; gap: 4px; height: 16px; margin-bottom: 4px; padding-right: 4px; }
.disks .pc { margin-left: 8px; }
.recent .tools { border-bottom: 1px solid #a9cce8; }
.active .tools, .active .stat { background: #a9cce9; }

.tabs { display: flex; align-items: flex-end; height: 24px; padding-left: 1px; border-top: 1px solid #a0a0a0; border-bottom: 2px solid #dadada; flex: none; }
.tab { height: 20px; gap: 5px; padding: 3px 4px 0 7px; font: 10px/12px "Liberation Mono", "Noto Sans CJK SC", monospace; background: #f0f0f0; border: 1px solid #dadada; border-bottom: 0; }
.tab.on { height: 23px; margin-bottom: -2px; padding: 0 8px 0 6px; background: #fff; }
.tab.cn12 { font-size: 12px; }

.body { display: flex; flex: 1; min-height: 0; background: #fff; border-left: 1px solid #a0a0a0; }
.list { flex: 1; min-width: 0; overflow: hidden; }
table { width: 100%; table-layout: fixed; border-collapse: collapse; }
.cn { width: 414px; }
.cs { width: 90px; }
th { position: relative; height: 25px; padding: 0 0 0 6px; font-weight: 400; text-align: left; border-left: 1px solid #e5e5e5; }
th:first-child { padding-left: 5px; border-left: 0; }
.sort { position: absolute; top: -2px; left: calc(50% - 5px); width: 10px; height: 10px; }
td { height: 21px; padding: 0 0 0 7px; font-weight: 700; font-size: 14px; line-height: 21px; white-space: nowrap; }
td span { display: flex; align-items: center; gap: 2px; height: 21px; margin-right: 1px; }
.han { font-size: 12px; margin-left: -2px; }
.dir { color: #008a00; }
.file { color: #0000b8; }
.php { color: #c08a3e; }
.png { color: #bb00bb; }
.hid { font-style: italic; }
.hid svg { opacity: .5; }
.hot span { background: #e5f1fb; }

/* scroll bars */
.vbar { width: 15px; display: flex; flex-direction: column; margin: 2px 1px 0 0; background: #f0f0f0; flex: none; }
.vbar button { width: 15px; height: 16px; }
.hbar { display: flex; height: 17px; background: #f0f0f0; border-bottom: 2px solid #fafafa; flex: none; }
.hbar.corner { padding-right: 17px; }
.hbar button { width: 17px; height: 15px; }
.track { flex: 1; min-width: 0; min-height: 0; }
.thumb { background: #cdcdcd; width: 100%; height: 100%; }

/* pane status bar */
.stat { display: flex; align-items: center; height: 23px; padding: 0 3px 0 2px; border-bottom: 1px solid #fff; flex: none; }
.count { gap: 6px; margin-left: 4px; }
.acts { display: flex; align-items: center; gap: 7px; margin-left: auto; }
.right .acts { margin-right: -1px; }
.sep { width: 1px; height: 18px; background: #8c8c8c; }
.filter { width: 100px; height: 20px; border: 1px solid #868686; border-left-color: #cfcfcf; background: #f0f0f0; }

/* window status bar */
.foot { display: flex; height: 22px; flex: none; }
.foot > div { display: flex; align-items: center; gap: 4px; padding-left: 4px; border-left: 1px solid #d4d4d4; white-space: nowrap; }
.foot .f0 { flex: 1; padding-left: 1px; border-left: 0; }
.f1 { width: 67px; }
.f2 { width: 143px; }
.f3 { width: 134px; }
.f4 { width: 194px; }
.grip { width: 12px; height: 12px; margin: 8px 1px 0 auto; }
```
